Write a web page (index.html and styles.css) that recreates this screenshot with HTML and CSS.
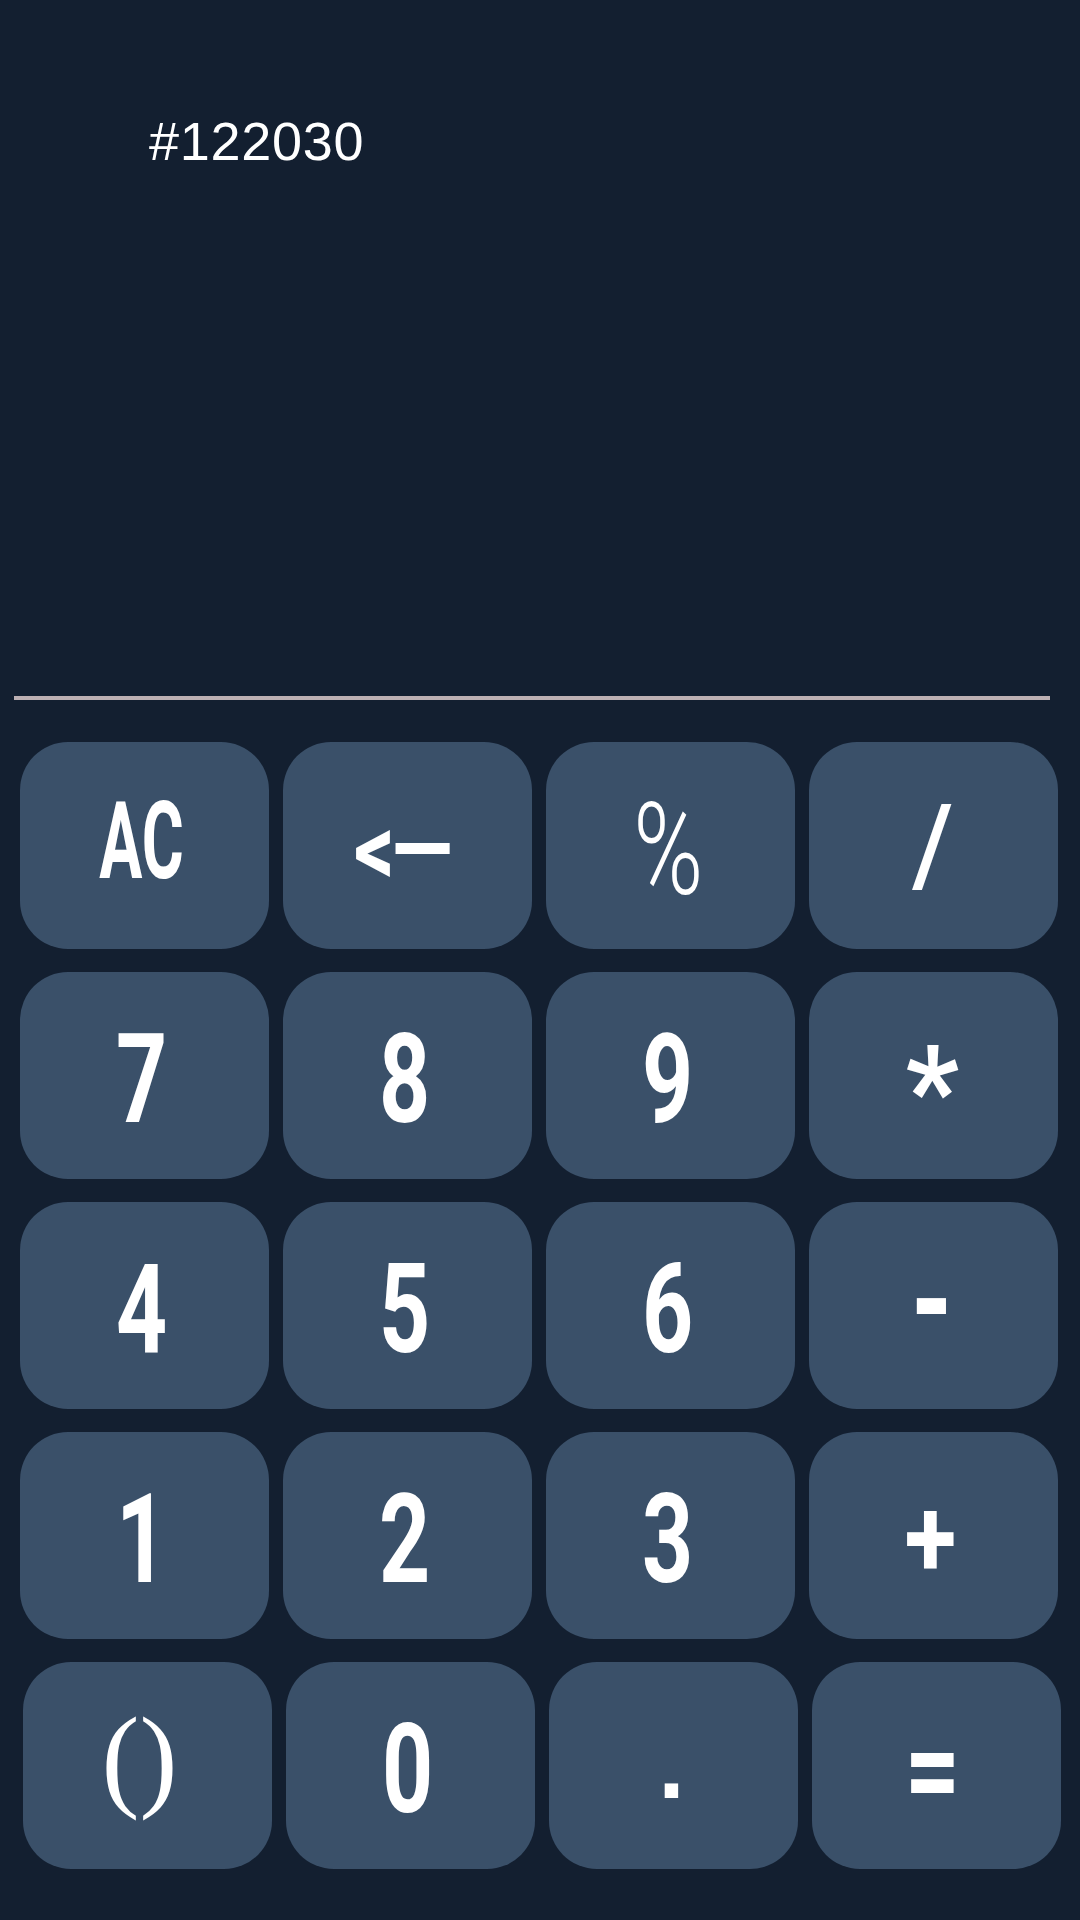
FILE: index.html
```html
<!DOCTYPE html>
<html lang="en">
<head>
<meta charset="utf-8">
<title>Calculator</title>
<link rel="stylesheet" href="styles.css">
</head>
<body>
<main class="calc">
  <section class="display">
    <div class="expr">#122030</div>
  </section>
  <hr class="divider">
  <section class="keypad">
    <div class="row">
      <button class="key k-ac"><span class="glyph">AC</span></button>
      <button class="key k-back"><span class="glyph">&lt;—</span></button>
      <button class="key k-pct"><span class="glyph">%</span></button>
      <button class="key k-slash"><span class="glyph">/</span></button>
    </div>
    <div class="row">
      <button class="key"><span class="glyph">7</span></button>
      <button class="key"><span class="glyph">8</span></button>
      <button class="key"><span class="glyph">9</span></button>
      <button class="key k-star"><span class="glyph">*</span></button>
    </div>
    <div class="row">
      <button class="key"><span class="glyph">4</span></button>
      <button class="key"><span class="glyph">5</span></button>
      <button class="key"><span class="glyph">6</span></button>
      <button class="key k-minus"><span class="glyph">-</span></button>
    </div>
    <div class="row">
      <button class="key"><span class="glyph">1</span></button>
      <button class="key"><span class="glyph">2</span></button>
      <button class="key"><span class="glyph">3</span></button>
      <button class="key k-plus"><span class="glyph">+</span></button>
    </div>
    <div class="row row-last">
      <button class="key k-paren"><span class="glyph">()</span></button>
      <button class="key"><span class="glyph">0</span></button>
      <button class="key k-dot"><span class="glyph">.</span></button>
      <button class="key k-eq"><span class="glyph">=</span></button>
    </div>
  </section>
</main>
</body>
</html>
```
FILE: styles.css
```css
html, body {
  margin: 0;
  padding: 0;
  background: #131f30;
}

.calc {
  width: 1080px;
  height: 1920px;
  background: #131f30;
  overflow: hidden;
}

.display {
  height: 696px;
  padding: 110px 0 0 149px;
  box-sizing: border-box;
}

.expr {
  font-family: "Liberation Sans", Arial, sans-serif;
  font-size: 54px;
  line-height: 62px;
  letter-spacing: 0.7px;
  color: #ffffff;
}

.divider {
  margin: 0 0 0 14px;
  width: 1036px;
  height: 4px;
  border: 0;
  background: #bcb0b3;
}

.keypad {
  padding: 42px 0 0 20px;
  display: flex;
  flex-direction: column;
  gap: 23px;
}

.row {
  display: flex;
  gap: 14px;
}

.row-last {
  margin-left: 3px;
}

.key {
  width: 249px;
  height: 207px;
  padding: 0;
  border: 0;
  border-radius: 48px;
  background: #3a5069;
  color: #ffffff;
  display: flex;
  align-items: center;
  justify-content: center;
  font-family: Roboto, "Liberation Sans", sans-serif;
  font-weight: 700;
  font-size: 124px;
  line-height: 1;
}

.glyph {
  display: inline-block;
  white-space: nowrap;
  transform: translate(-3px, 4px) scaleX(0.72);
}

.k-ac { font-size: 107px; }
.k-ac .glyph { transform: translate(-3px, -4px) scaleX(0.6); }

.k-back { font-size: 100px; font-weight: 700; }
.k-back .glyph { letter-spacing: -4px; transform: translate(-6px, 4px) scaleX(0.8); }

.k-pct { font-size: 128px; font-weight: 300; }
.k-pct .glyph { transform: translate(-2px, 4px) scaleX(0.74); }

.k-slash { font-size: 112px; font-weight: 500; }
.k-slash .glyph { transform: translate(-1px, -1px) scaleX(0.95); }

.k-star .glyph { transform: translate(-1px, 16px) scaleX(0.95); }

.k-minus { font-weight: 900; }
.k-minus .glyph { transform: translate(-2px, -4px) scaleX(0.8); }

.k-plus { font-size: 112px; }
.k-plus .glyph { transform: translate(-3px, 2px) scaleX(0.85); }

.k-eq .glyph { transform: translate(-4px, 4px) scaleX(0.78); }

.k-dot {
  font-family: "DejaVu Sans", sans-serif;
  font-size: 76px;
}
.k-dot .glyph { transform: translate(-2px, 6px); }

.k-paren {
  font-family: "Liberation Serif", "Times New Roman", serif;
  font-weight: 400;
  font-size: 114px;
}
.k-paren .glyph { transform: translate(-8px, -8px); }
```
